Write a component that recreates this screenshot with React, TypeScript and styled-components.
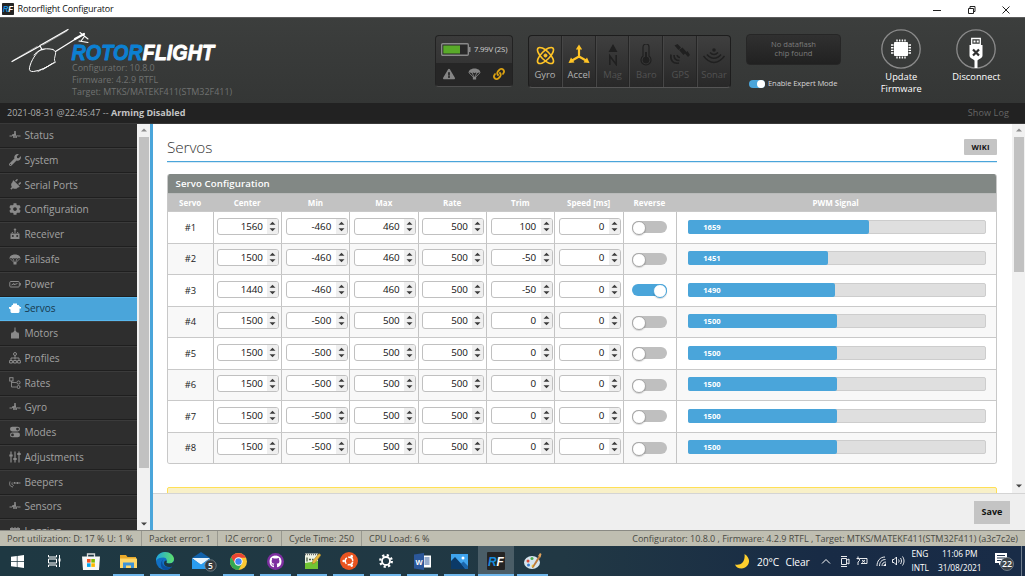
import React from 'react';
import styled, { createGlobalStyle, css } from 'styled-components';
import { FaWrench, FaPlug, FaCog, FaLink, FaExclamationTriangle, FaGithub } from 'react-icons/fa';

const BLUE = '#4aa5da';

const GlobalStyle = createGlobalStyle`
  * { box-sizing: border-box; }
  html, body { margin: 0; padding: 0; overflow: hidden; }
  body { font-family: "Open Sans", "Liberation Sans", sans-serif; font-size: 10px; color: #222; }
  svg { display: block; flex: none; }
`;

const Window = styled.div`
  width: 1025px; height: 576px; display: flex; flex-direction: column; overflow: hidden; background: #fff;
`;

/* ---------- title bar ---------- */
const TitleBar = styled.div`
  height: 17px; flex: none; display: flex; align-items: center; padding: 0 14px 0 1.5px; background: #fff;
`;
const AppTitle = styled.span`
  flex: 1; padding-left: 4px; font-size: 9px; line-height: 17px; color: #111; letter-spacing: -0.17px; white-space: nowrap;
`;
const WindowButtons = styled.div` display: flex; align-items: center; padding-top: 3px; `;

/* ---------- header ---------- */
const Header = styled.header`
  height: 86px; flex: none; display: flex; align-items: flex-start;
  background: linear-gradient(#3c3e3d, #343635); border-top: 1px solid #5c5c5c;
`;
const Brand = styled.div` width: 435px; padding-top: 8px; `;
const BrandInfo = styled.div`
  padding-left: 72px; margin-top: -4px; font-size: 8.95px; line-height: 12px; color: #707271; white-space: nowrap;
`;
const InfoLine = styled.div``;
const StatusBox = styled.div`
  width: 78px; height: 52px; margin-top: 17px; border: 1px solid #222; border-bottom-color: #4f4f4f; border-radius: 4px;
  background: linear-gradient(#3b3b3b, #2f2f2f); overflow: hidden; display: flex; flex-direction: column;
`;
const BatteryRow = styled.div`
  height: 27px; display: flex; align-items: center; padding: 0 0 1px 5px; gap: 3px; color: #d0d0d0; font-size: 7.8px;
  letter-spacing: -0.22px; white-space: nowrap;
`;
const WarnRow = styled.div`
  flex: 1; background: #262626; display: flex; align-items: center; justify-content: space-between; padding: 0 7px 2px;
  color: #858585;
`;
const SensorBox = styled.div`
  width: 203px; height: 53px; margin: 17px 0 0 15px; display: flex; border: 1px solid #1d1d1d; border-bottom-color: #555;
  border-radius: 4px; background: linear-gradient(#3f3f3f, #282828); overflow: hidden;
`;
const Sensor = styled.div<{ $on?: boolean }>`
  flex: 1; display: flex; flex-direction: column; align-items: center; padding-top: 8px; font-size: 9.4px; line-height: 12px;
  color: ${(p) => (p.$on ? '#b2b2b2' : '#525252')};
  border-right: 1px solid #252525; border-left: 1px solid #464646;
  &:first-child { border-left: 0; } &:last-child { border-right: 0; }
  svg { color: ${(p) => (p.$on ? '#ffc426' : '#202020')}; margin-bottom: 3px; }
`;
const FlashColumn = styled.div` width: 95px; margin: 16px 0 0 15px; display: flex; flex-direction: column; `;
const FlashBox = styled.div`
  height: 31px; border: 1px solid #262626; border-radius: 4px; background: linear-gradient(#303030, #212121);
  color: #7c7c7c; font-size: 7.6px; line-height: 9px; text-align: center; padding-top: 5px;
`;
const ExpertMode = styled.div`
  display: flex; align-items: center; margin: 13px 0 0 2.5px; gap: 3.500px; font-size: 7.6px; line-height: 10px; color: #d6d6d6;
  white-space: nowrap; letter-spacing: -0.1px;
`;
const ExpertLabel = styled.span` padding-bottom: 1px; `;
const SmallSwitch = styled.span`
  width: 16px; height: 8px; border-radius: 4px; background: ${BLUE}; display: flex; justify-content: flex-end;
  &::after { content: ""; width: 8px; height: 8px; border-radius: 50%; background: #fff; }
`;
const HeaderAction = styled.div<{ $gap: number }>`
  width: 60px; margin: 11px 0 0 ${(p) => p.$gap}px; display: flex; flex-direction: column; align-items: center;
  font-size: 9.3px; line-height: 12px; color: #fff; text-align: center; white-space: nowrap;
  svg { margin-bottom: 1.500px; }
`;

const LogBar = styled.div`
  height: 21px; flex: none; display: flex; justify-content: space-between; align-items: center; padding: 0 16px 1px 7px;
  background: #222; border-bottom: 1px solid #393939; color: #ababab; font-size: 9.05px; white-space: nowrap;
  b { color: #c4c4c4; }
`;
const ShowLog = styled.span` color: #666; letter-spacing: 0.1px; `;

/* ---------- sidebar ---------- */
const Main = styled.div` height: 406px; flex: none; display: flex; overflow: hidden; `;
const Sidebar = styled.nav` width: 137px; height: 406px; overflow: hidden; background: #2e2e2e; `;
const NavItem = styled.div<{ $active?: boolean }>`
  height: 24.75px; display: flex; align-items: center; padding: 0 0 1px 9px; gap: 3.4px;
  font-size: 10.1px; color: #a2a2a2; border-top: 1px solid #3b3b3b; border-bottom: 1px solid #1f1f1f;
  &:first-child { margin-top: -0.7px; }
  svg { color: #8a8a8a; }
  ${(p) => p.$active && css`
    background: ${BLUE}; color: #17394d; border-color: #59b8ee;
    svg { color: #fff; }
  `}
`;
const TiltedIcon = styled.span` display: block; transform: rotate(45deg); `;
const ScrollTrack = styled.div<{ $w: number; $bottom: number }>`
  width: ${(p) => p.$w}px; flex: none; background: #f1f1f1; display: flex; flex-direction: column; align-items: center;
  justify-content: space-between; padding: 4px 0 ${(p) => p.$bottom}px;
`;
const ScrollThumb = styled.div<{ $h: number }>`
  width: 10px; height: ${(p) => p.$h}px; background: #c1c1c1; margin-top: 5px;
`;
const ScrollHead = styled.div` display: flex; flex-direction: column; align-items: center; `;

/* ---------- content ---------- */
const Content = styled.div`
  width: 875px; flex: none; border-left: 3px solid ${BLUE}; display: flex; flex-direction: column; background: #fff;
`;
const ContentScroll = styled.div` height: 369px; display: flex; overflow: hidden; `;
const Page = styled.div` width: 859px; padding: 13px 15px 0 14px; flex: none; `;
const PageHead = styled.div`
  height: 25px; border-bottom: 1px solid ${BLUE}; display: flex; justify-content: space-between; align-items: flex-start;
`;
const PageHeadRule = styled(PageHead)` box-shadow: 0 1px 0 #d8eaf5; `;
const PageTitle = styled.h1`
  margin: 0; font-size: 15.3px; font-weight: 300; line-height: 20px; color: #333; letter-spacing: -0.1px;
`;
const WikiButton = styled.div`
  width: 33px; height: 16px; margin-top: 2px; background: #c4c4c4; text-align: center; line-height: 16px; border-radius: 1px;
  font-size: 7.6px; font-weight: 700; color: #111; letter-spacing: 0.2px;
`;
const Panel = styled.section`
  margin: 12px 0 0 0; border: 1px solid #c8c8c8; border-top: 0; border-radius: 3px; overflow: hidden; width: 830px;
`;
const PanelTitle = styled.div`
  height: 20px; background: #828885; color: #fff; font-size: 9.65px; font-weight: 600; line-height: 20px; padding-left: 7.5px;
  border-bottom: 1px solid #b9bbba; letter-spacing: 0.1px;
`;
const columns = '45.8px repeat(6, 68.3px) 53px 1fr';
const HeadRow = styled.div`
  display: grid; grid-template-columns: ${columns}; height: 17px; background: #c2c2c2; color: #fff; font-size: 8px;
  font-weight: 700; line-height: 17px; text-align: center;
  span { padding-right: 1.500px; }
`;
const Row = styled.div`
  display: grid; grid-template-columns: ${columns}; height: 31.5px; border-top: 1px solid #c9c9c9; background: #fff;
  &:nth-child(even) { background: #f8f8f8; }
`;
const Cell = styled.div`
  display: flex; align-items: center; justify-content: center; border-right: 1px solid #c4c4c4; font-size: 9.4px;
  &:last-child { border-right: 0; }
`;
const NumberField = styled.div`
  width: 62px; height: 17px; border: 1px solid #c0c0c0; border-radius: 3px; background: #fff; display: flex; overflow: hidden;
  font-size: 9.8px; line-height: 15px; color: #111; margin: -2px 0 0 2px;
`;
const NumberValue = styled.span` flex: 1; text-align: right; padding-right: 4.500px; letter-spacing: -0.05px; `;
const Spinner = styled.span`
  width: 11px; background: #efefef; display: flex; align-items: center; justify-content: center;
`;
const Switch = styled.span<{ $on: boolean }>`
  width: 35px; height: 12px; border-radius: 6px; background: ${(p) => (p.$on ? BLUE : '#bfbfbf')}; display: flex;
  margin-left: -1px; justify-content: ${(p) => (p.$on ? 'flex-end' : 'flex-start')};
  &::after {
    content: ""; width: 12px; height: 12px; border-radius: 50%; background: #fff;
    border: 1px solid ${(p) => (p.$on ? BLUE : '#a5a5a5')}; box-shadow: 0 1px 1px rgba(0,0,0,.15);
  }
`;
const Meter = styled.div`
  width: 298px; height: 14px; margin: -1px 0 0 2px; background: #dfdfdf; border: 1px solid #cdcdcd; border-radius: 2px; display: flex;
`;
const MeterFill = styled.div`
  margin: -1px 0 -1px -1px; background: ${BLUE}; border-radius: 2px; color: #fff; font-size: 7.6px; font-weight: 700;
  line-height: 15px; padding-left: 15px;
`;
const Note = styled.div`
  margin-top: 23px; height: 30px; background: #f8f0c8; border: 1px solid #ffe055; border-radius: 2px; width: 830px;
`;
const SaveBar = styled.div`
  height: 37px; background: #efefef; border-top: 1px solid #d4d4d4; display: flex; justify-content: flex-end;
  padding: 7px 15px 0 0;
`;
const SaveButton = styled.div`
  width: 36px; height: 23px; background: #c4c4c4; font-size: 9px; font-weight: 700; line-height: 22px; text-align: center;
  color: #111;
`;

/* ---------- status bar ---------- */
const StatusBar = styled.div`
  height: 16px; flex: none; background: #bfbeb1; border-top: 1px solid #8a8a84; display: flex; line-height: 16px;
  font-size: 9.04px; color: #494943; white-space: nowrap;
`;
const StatusCell = styled.div<{ $w: number }>`
  width: ${(p) => p.$w}px; padding-left: 7px; border-right: 1px solid #999990;
  &:nth-child(5) { border-right: 0; }
`;
const StatusRight = styled.div` flex: 1; text-align: right; padding-right: 7px; letter-spacing: -0.03px; `;

/* ---------- taskbar ---------- */
const Taskbar = styled.footer`
  height: 30px; flex: none; display: flex; background: linear-gradient(90deg, #1e3842, #213844 55%, #182b45 80%, #192c47);
  color: #fff;
`;
const TaskButton = styled.div<{ $open?: boolean; $active?: boolean }>`
  width: 36.8px; height: 30px; display: flex; align-items: center; justify-content: center; position: relative;
  background: ${(p) => (p.$active ? '#4a5d67' : 'transparent')};
  &:first-child { margin-left: -0.7px; }
  ${(p) => (p.$open || p.$active) && css`
    &::after {
      content: ""; position: absolute; bottom: 0; left: ${p.$active ? 0 : 3}px; right: ${p.$active ? 0 : 3}px; height: 2px;
      background: #6fb7ec;
    }
  `}
`;
const TrayGroup = styled.div`
  margin-left: auto; display: flex; align-items: center; font-size: 10.2px; white-space: nowrap;
`;
const Weather = styled.span` padding: 1px 0 0 7px; width: 70.5px; letter-spacing: -0.1px; word-spacing: 4px; `;
const TwoLines = styled.div<{ $w: number; $right?: boolean }>`
  width: ${(p) => p.$w}px; font-size: 8.4px; line-height: 13.5px; letter-spacing: -0.1px; text-align: ${(p) => (p.$right ? 'center' : 'left')};
  margin-top: -1px;
`;
const Notices = styled.div` width: 39px; display: flex; padding-left: 12px; `;
const DesktopEdge = styled.div` width: 4px; height: 30px; border-left: 1px solid #6e7c8c; `;

const RfMark = ({ size }: { size: number }) => (
  <svg width={size} height={size} viewBox="0 0 18 18">
    <rect width="18" height="18" rx="1" fill="#242424" />
    <text x="1" y="13.5" fontFamily="Liberation Sans" fontWeight="700" fontStyle="italic" fontSize="12.5" fill="#178bdc" textLength="15.8" lengthAdjust="spacingAndGlyphs">R<tspan fill="#fff">F</tspan></text>
  </svg>
);

const Logo = () => (
  <svg width="220" height="40" viewBox="0 26 220 40" fill="none" stroke="#fff" strokeLinecap="round">
    <path d="M12 61.5L40 46M40 45.5L68 29.5" strokeWidth="1.3" />
    <path d="M13 60.5L37 46.5M43 45L67 31" strokeWidth=".5" />
    <path d="M40 46l2 3.5" strokeWidth="1.2" />
    <path d="M53 49.5c-4-1-9-1-12 .2-5 3-10 11-11.5 18-.6 3 1 4 4 3.8 6-.6 14-4.5 18-7.5" strokeWidth="1" />
    <path d="M53 49.5c2 1 3 2.5 2.5 4.5l-1 4.5c-.4 3 1 2 .5 4M34 55c3-4 7-5.5 10-5.5M43 69.5l11-7" strokeWidth=".9" />
    <path d="M38 71.5l17-9" strokeWidth=".8" />
    <path d="M55.5 51.5l20-12.5" strokeWidth="1.3" />
    <path d="M75 39l9-5" strokeWidth="2.2" />
    <path d="M80 32.5l8 6.5M79 41c3 .5 6 1 9 1.5M84 37l-3 4" strokeWidth="1.1" />
    <text x="71.5" y="59.5" fontFamily="Liberation Sans" fontWeight="700" fontStyle="italic" fontSize="22.5" strokeLinejoin="round"
      fill="#0c80d2" stroke="#0c80d2" strokeWidth=".9" textLength="142.5" lengthAdjust="spacingAndGlyphs">
      ROTOR<tspan fill="#fff" stroke="#fff">FLIGHT</tspan>
    </text>
  </svg>
);

/* The lower part of the helicopter's skids reaches beside the info lines. */
const LogoFrame = styled.div` height: 40px; svg { overflow: visible; } `;

const Parachute = ({ size = 12 }: { size?: number }) => (
  <svg width={size} height={size} viewBox="0 0 12 12" fill="none" stroke="currentColor">
    <path d="M.5 5.5C.5 0 11.5 0 11.5 5.5L10 5l-1.500.8L7.200 5 6 5.800 4.800 5l-1.300.8L2 5z" fill="currentColor" stroke="none" />
    <path d="M1 5.5L5 9.5M11 5.5L7 9.5M4 5.5l1.5 4M8 5.5L6.5 9.5" strokeWidth=".8" />
    <path d="M4.5 9h3v2.5h-3z" fill="currentColor" stroke="none" />
  </svg>
);

const Glyph = ({ children }: { children: React.ReactNode }) => (
  <svg width="12" height="12" viewBox="0 0 12 12" fill="none" stroke="currentColor" strokeWidth="1">{children}</svg>
);
const Pulse = () => <Glyph><path d="M.5 7h2.700l1-2 .8 4 1-7 1 7 1-2.500.5.5h3" strokeLinejoin="round" /></Glyph>;

const navItems: [string, React.ReactNode][] = [
  ['Status', <Pulse />],
  ['System', <FaWrench size={12} />],
  ['Serial Ports', <TiltedIcon><FaPlug size={12} /></TiltedIcon>],
  ['Configuration', <FaCog size={12} />],
  ['Receiver', <Glyph><path d="M6 5V1.5" /><circle cx="6" cy="1.5" r=".7" fill="currentColor" /><path d="M1.5 5.5h9v5.5h-9z" fill="currentColor" stroke="none" /><path d="M3 5.5l.5-1.5M9 5.5L8.500 4" /><circle cx="3.8" cy="8" r="1" fill="#2e2e2e" stroke="none" /><circle cx="8.2" cy="8" r="1" fill="#2e2e2e" stroke="none" /></Glyph>],
  ['Failsafe', <Parachute />],
  ['Power', <Glyph><rect x=".8" y="3.5" width="9.5" height="5.5" rx="1" /><path d="M11.3 5v2.5M2.500 7l2.500-1.500v1.200L8.500 5.500" /></Glyph>],
  ['Servos', <Glyph><path d="M4 1.500h4v1.500h1.500L11 5h1v1.500h-1.500V10l-1 1h-7l-1-1V7.500L0 6.500V5h2l1-2h1z" fill="currentColor" stroke="none" /></Glyph>],
  ['Motors', <Glyph><path d="M5.500.5h1v3l1.500 2H9.500L10 7v4.500H2V7l.5-1.500H4l1.500-2z" fill="currentColor" stroke="none" /></Glyph>],
  ['Profiles', <Glyph><circle cx="6" cy="2" r="1.500" /><path d="M6 3.500v4M2 8V6h8v2" /><path d="M.6 8.500h2.800v2.500H.6zM4.600 8.500h2.800v2.500H4.600zM8.600 8.500h2.800v2.500H8.600z" /></Glyph>],
  ['Rates', <Glyph><rect x=".7" y=".7" width="3.300" height="3.300" /><path d="M2.500 4v6h5M2.500 5.500h5" strokeWidth=".9" /><circle cx="9.500" cy="5.500" r="1.600" /><circle cx="9.500" cy="10" r="1.500" /></Glyph>],
  ['Gyro', <Pulse />],
  ['Modes', <Glyph><rect x="1" y=".8" width="10" height="4.600" rx="2.300" fill="currentColor" stroke="none" /><rect x="1" y="6.600" width="10" height="4.600" rx="2.300" fill="currentColor" stroke="none" /><circle cx="8.500" cy="3.100" r="1.400" fill="#2e2e2e" stroke="none" /><circle cx="3.500" cy="8.900" r="1.400" fill="#2e2e2e" stroke="none" /></Glyph>],
  ['Adjustments', <Glyph><path d="M2 .5v11M6 .5v11M10 .5v11" strokeWidth="1.200" /><path d="M.3 4.500h3.400M4.300 8h3.400M8.300 3h3.400" strokeWidth="1.800" /></Glyph>],
  ['Beepers', <Glyph><path d="M1 5.500C0 9 1 10.500 4 11M3.200 6.500c-.6 1.500 0 2.500 1.500 3M4.500 7h7M8.500 6v2M5.500 6v1.500" /></Glyph>],
  ['Sensors', <Pulse />],
  ['Logging', <Glyph><path d="M1 3h10v7H1z" fill="currentColor" stroke="none" /><path d="M3 2v3M6 2v3M9 2v3" /></Glyph>],
];

const sensors: { name: string; on?: boolean; icon: React.ReactNode }[] = [
  { name: 'Gyro', on: true, icon: <><g strokeWidth="1.6"><ellipse cx="11.5" cy="11.5" rx="10.500" ry="4.300" transform="rotate(45 11.5 11.5)" /><ellipse cx="11.5" cy="11.5" rx="10.500" ry="4.300" transform="rotate(-45 11.5 11.5)" /></g><circle cx="11.5" cy="11.5" r="1.500" fill="currentColor" /></> },
  { name: 'Accel', on: true, icon: <><path d="M11 13V4M11 12.500L4 16.500M11 12.500L18 16.500" strokeWidth="2.200" /><path d="M11 .5l3.200 5H7.800zM.5 19l2.500-5.500 3.500 5zM21.500 19L19 13.500l-3.500 5z" fill="currentColor" stroke="none" /></> },
  { name: 'Mag', icon: <><path d="M11 0l4.500 8h-9z" fill="currentColor" stroke="none" /><path d="M7.800 21V12l6.400 8.500V11" strokeWidth="1.600" /></> },
  { name: 'Baro', icon: <><path d="M8 12V3a3 3 0 0 1 6 0v9a5 5 0 1 1-6 0z" strokeWidth="1.200" /><circle cx="11" cy="16" r="3" fill="currentColor" /><path d="M11 8v8" strokeWidth="1.800" /></> },
  { name: 'GPS', icon: <><path d="M5.500 1.500l3-1.500 3.500 3.500-2.500 2.500zM10 6l3.500-2.500 4 4.500-3 3zM16 9.500l2.500-2.500 2.500 4-2 2z" fill="currentColor" stroke="none" /><path d="M2 10.500c-1 6 2 9.500 8 8.500M5 11c0 3.500 2 5.500 5.500 5.500M8 11c.5 1.500 1.500 2.500 3 2.500" strokeWidth="1.600" /></> },
  { name: 'Sonar', icon: <><path d="M.5 12c6 8.500 15 8.500 21 0M4 10.500c4 5 10 5 14 0M7 8.500c2.500 2.700 5.500 2.700 8 0" strokeWidth="1.500" /><circle cx="11" cy="6" r="1.800" fill="currentColor" stroke="none" /></> },
];

const servos: { values: number[]; reverse?: boolean; pwm: number }[] = [
  { values: [1560, -460, 460, 500, 100, 0], pwm: 1659 },
  { values: [1500, -460, 460, 500, -50, 0], pwm: 1451 },
  { values: [1440, -460, 460, 500, -50, 0], reverse: true, pwm: 1490 },
  { values: [1500, -500, 500, 500, 0, 0], pwm: 1500 },
  { values: [1500, -500, 500, 500, 0, 0], pwm: 1500 },
  { values: [1500, -500, 500, 500, 0, 0], pwm: 1500 },
  { values: [1500, -500, 500, 500, 0, 0], pwm: 1500 },
  { values: [1500, -500, 500, 500, 0, 0], pwm: 1500 },
];

const headings = ['Servo', 'Center', 'Min', 'Max', 'Rate', 'Trim', 'Speed [ms]', 'Reverse', 'PWM Signal'];

const Arrow = ({ down, color }: { down?: boolean; color: string }) => (
  <svg width="6" height="4" viewBox="0 0 6 4"><path d={down ? 'M0 .5h6L3 3.500z' : 'M0 3.500h6L3 .5z'} fill={color} /></svg>
);

const taskIcons: { open?: boolean; active?: boolean; icon: React.ReactNode }[] = [
  { icon: <svg width="13" height="13" viewBox="0 0 13 13" fill="#fff"><path d="M0 1.800L5.800 1v5.100H0zM6.500.9L13 0v6.100H6.500zM0 6.800h5.800V12L0 11.200zM6.500 6.800H13V13l-6.500-.9z" /></svg> },
  { icon: <svg width="13" height="12" viewBox="0 0 13 12" fill="none" stroke="#fff"><path d="M.5 0v2h8V0M.5 12v-2h8v2M.5 4h8v4h-8zM11.500 0v12" /><path d="M10.500 3.500h2v3h-2z" fill="#fff" stroke="none" /></svg> },
  { icon: <svg width="18" height="18" viewBox="0 0 18 18"><path d="M5.500 5V2h7v3" fill="none" stroke="#ddd" strokeWidth="1.300" /><path d="M0 4.500h18L17 18H1z" fill="#f7f7f7" /><path d="M5 7h3.600v3.600H5z" fill="#f25022" /><path d="M9.300 7h3.600v3.600H9.300z" fill="#7fba00" /><path d="M5 11.300h3.600v3.600H5z" fill="#00a4ef" /><path d="M9.300 11.300h3.600v3.600H9.300z" fill="#ffb900" /></svg> },
  { open: true, icon: <svg width="17" height="15" viewBox="0 0 17 15"><path d="M0 1h6l1.500 2H16v4H0z" fill="#e9a92a" /><path d="M0 4.500h17V14H0z" fill="#ffd667" /><path d="M3 14V8.500h11V14h-3v-2.500H6V14z" fill="#3f93d8" /></svg> },
  { open: true, icon: <svg width="18" height="18" viewBox="0 0 18 18"><defs><linearGradient id="eg" x1="0" x2="1"><stop offset="0" stopColor="#1fa3e0" /><stop offset="1" stopColor="#5ee06a" /></linearGradient></defs><circle cx="9" cy="9" r="9" fill="#1170c4" /><path d="M0 9C0 3.500 4 0 9 0s9 3.500 9 7c0 3-2.200 4.500-5 4.500-2 0-3-.7-2.500-1.500.8-1 .5-4.500-3-4.500C4 5.500 1 6.500 0 9z" fill="url(#eg)" /><path d="M7.500 7c-3 3-.5 8.500 5 8.200 2 0 3-.5 4-1-2 3-5 3.800-7.500 3.800C4 17 3.500 9.500 7.500 7z" fill="#0c4f9c" /><path d="M10.600 9.800c-.6 1 .4 1.700 2.400 1.700 2 0 4-.8 5-2.500 0 2-.6 4-1.500 5.200-4 2-8.500.3-8.500-3 0-1.600 1-2.700 2-2.700.8 0 1 .7.6 1.300z" fill="#1e3842" /></svg> },
  { icon: <svg width="30" height="21" viewBox="-4 0 30 21"><path d="M1 7l9-6 9 6v11H1z" fill="#1162ab" /><path d="M1 7h18l-9 7z" fill="#e8f4fc" /><path d="M1 7.500V18h18V7.500l-9 6z" fill="#2a9df0" /><circle cx="19.500" cy="14.500" r="5.700" fill="#353b3f" stroke="#85909a" strokeWidth=".7" /><text x="19.500" y="17.500" fill="#fff" fontFamily="Open Sans" fontSize="8.500" fontWeight="600" textAnchor="middle">5</text></svg> },
  { open: true, icon: <svg width="17" height="17" viewBox="0 0 18 18"><circle cx="9" cy="9" r="9" fill="#fcc934" /><path d="M9 5h7.900A9 9 0 0 0 1.200 4.500L5 11z" fill="#ea4335" /><path d="M1.200 4.500A9 9 0 0 0 9 18l3.700-7L5.500 11z" fill="#34a853" /><circle cx="9" cy="9" r="4.400" fill="#fff" /><circle cx="9" cy="9" r="3.400" fill="#4285f4" /></svg> },
  { open: true, icon: <svg width="17" height="17" viewBox="0 0 17 17"><circle cx="8.500" cy="8.500" r="8.500" fill="#7d2fa0" /><FaGithub x={2.2} y={2.2} size={12.6} color="#fff" /></svg> },
  { open: true, icon: <svg width="17" height="18" viewBox="0 0 17 18"><path d="M1 1.500h13V17H1z" fill="#eef3e4" /><path d="M1 11l13-2v8H1z" fill="#71c334" /><path d="M1 2.500h13" stroke="#666" strokeDasharray="1 1" strokeWidth="1.500" /><path d="M3 5.500v4M5 7.500h2M8 7.500h1.500" stroke="#4a5a42" strokeWidth="1.300" /><path d="M8 12l1-3.500 6-7 2 1.500L11 11z" fill="#e8b83c" stroke="#8b702d" strokeWidth=".5" /></svg> },
  { open: true, icon: <svg width="18" height="18" viewBox="0 0 18 18"><circle cx="9" cy="9" r="9" fill="#e95420" /><circle cx="9" cy="9" r="3.800" fill="none" stroke="#fff" strokeWidth="1.500" strokeDasharray="6.500 1.460" strokeDashoffset="-.7" /><g fill="#fff"><circle cx="3.700" cy="9" r="1.300" /><circle cx="11.700" cy="4.400" r="1.300" /><circle cx="11.700" cy="13.600" r="1.300" /></g></svg> },
  { open: true, icon: <svg width="14" height="14" viewBox="0 0 14 14" fill="none" stroke="#fff"><circle cx="7" cy="7" r="4" strokeWidth="1.800" /><circle cx="7" cy="7" r="5.800" strokeWidth="2.300" strokeDasharray="2.200 2.355" /></svg> },
  { open: true, icon: <svg width="17" height="17" viewBox="0 0 17 17"><path d="M9 2.500h8v12H9z" fill="#fff" /><path d="M10.500 5h5M10.500 7h5M10.500 9h5M10.500 11h5" stroke="#2b579a" /><path d="M0 1.500L10 0v17L0 15.500z" fill="#2b579a" /><text x="5" y="11.500" fill="#fff" textAnchor="middle" fontFamily="Liberation Sans" fontWeight="700" fontSize="7.500">W</text></svg> },
  { open: true, icon: <svg width="17" height="15" viewBox="0 0 17 15"><path d="M0 0h17v15H0z" fill="#3fa4ee" /><path d="M0 7l4-4 11 12H0z" fill="#0b3a68" /><path d="M10 9.500l2.500-2 4.500 4.500v3h-3z" fill="#1c66ab" /><circle cx="12" cy="4" r="1.500" fill="#fff" /></svg> },
  { active: true, icon: <RfMark size={18} /> },
  { open: true, icon: <svg width="18" height="17" viewBox="0 0 18 17"><ellipse cx="8" cy="9.500" rx="8" ry="6.500" fill="#d6e5ef" /><circle cx="4" cy="8" r="1.500" fill="#d84b3b" /><circle cx="8" cy="5.500" r="1.500" fill="#4cae4f" /><circle cx="4.500" cy="12" r="1.500" fill="#3b7fd0" /><circle cx="9" cy="13" r="1.500" fill="#eec53a" /><path d="M8 15c2-5 4-8 7-12l1.500 1C14 8 12 11 9 15z" fill="#bd7a3c" /><path d="M14 3l2-3 1.500 1-1 3.500z" fill="#e0a35d" /></svg> },
];

const ServoRow = ({ index, servo }: { index: number; servo: (typeof servos)[number] }) => (
  <Row>
    <Cell>#{index + 1}</Cell>
    {servo.values.map((v, i) => (
      <Cell key={i}>
        <NumberField>
          <NumberValue>{v}</NumberValue>
          <Spinner>
            <svg width="7" height="11" viewBox="0 0 7 11" fill="#3d3d3d"><path d="M.5 3.800h6L3.500.8zM.5 7.200h6l-3 3z" /></svg>
          </Spinner>
        </NumberField>
      </Cell>
    ))}
    <Cell><Switch $on={!!servo.reverse} /></Cell>
    <Cell>
      <Meter><MeterFill style={{ width: `${((servo.pwm - 750) / 1500) * 298}px` }}>{servo.pwm}</MeterFill></Meter>
    </Cell>
  </Row>
);

export default function App() {
  return (
    <Window>
      <GlobalStyle />
      <TitleBar>
        <RfMark size={12} />
        <AppTitle>Rotorflight Configurator</AppTitle>
        <WindowButtons>
          <svg width="78" height="10" viewBox="0 0 78 10" fill="none" stroke="#222">
            <path d="M0 5.500h8M35.500 3.500h5v5h-5zM37 3V1.500h5v5h-1.500M69.500 1.500l7 7M76.500 1.500l-7 7" />
          </svg>
        </WindowButtons>
      </TitleBar>

      <Header>
        <Brand>
          <LogoFrame><Logo /></LogoFrame>
          <BrandInfo>
            <InfoLine>Configurator: 10.8.0</InfoLine>
            <InfoLine>Firmware: 4.2.9 RTFL</InfoLine>
            <InfoLine>Target: MTKS/MATEKF411(STM32F411)</InfoLine>
          </BrandInfo>
        </Brand>
        <StatusBox>
          <BatteryRow>
            <svg width="30" height="13" viewBox="0 0 30 13">
              <rect x=".7" y=".7" width="26.600" height="11.600" rx="1" fill="#292929" stroke="#8a8a8a" strokeWidth="1.400" />
              <path d="M28 4h1.500v5H28z" fill="#8a8a8a" />
              <path d="M2.300 2.500H19v8H2.300z" fill="#59aa29" />
            </svg>
            7.99V (2S)
          </BatteryRow>
          <WarnRow>
            <FaExclamationTriangle size={12} />
            <Parachute size={13} />
            <FaLink size={12} color="#d9a012" />
          </WarnRow>
        </StatusBox>
        <SensorBox>
          {sensors.map((s) => (
            <Sensor key={s.name} $on={s.on}>
              <svg width="22" height="22" viewBox="0 0 22 22" fill="none" stroke="currentColor">{s.icon}</svg>
              {s.name}
            </Sensor>
          ))}
        </SensorBox>
        <FlashColumn>
          <FlashBox>No dataflash<br />chip found</FlashBox>
          <ExpertMode><SmallSwitch /><ExpertLabel>Enable Expert Mode</ExpertLabel></ExpertMode>
        </FlashColumn>
        <HeaderAction $gap={30.3}>
          <svg width="40" height="40" viewBox="0 0 40 40" fill="none" stroke="#fff">
            <circle cx="20" cy="20" r="19.200" stroke="#8b8b8b" strokeWidth="1.300" />
            <path d="M13.500 13.500h13v13h-13z" fill="#fff" />
            <path d="M16 10.500v2M18.700 10.500v2M21.400 10.500v2M24 10.500v2M16 27.500v2M18.700 27.500v2M21.400 27.500v2M24 27.500v2M10 16h2.500M10 18.700h2.500M10 21.400h2.500M10 24h2.500M27.500 16H30M27.500 18.700H30M27.500 21.400H30M27.500 24H30" strokeWidth="1.400" />
          </svg>
          Update<br />Firmware
        </HeaderAction>
        <HeaderAction $gap={15}>
          <svg width="40" height="40" viewBox="0 0 40 40" fill="none">
            <circle cx="20" cy="20" r="19.200" stroke="#8b8b8b" strokeWidth="1.300" />
            <path d="M15.700 9.500h8.600v6h-8.600z" stroke="#fff" strokeWidth="1.300" />
            <path d="M17.500 11.500h2v2h-2zM20.700 11.500h2v2h-2zM13.500 16h13v10.500c0 3-4 3.500-5 5V39h-3v-7.500c-1-1.500-5-2-5-5z" fill="#fff" />
            <path d="M17 20.500l6 6M23 20.500l-6 6" stroke="#2f2f2f" strokeWidth="2.200" />
          </svg>
          Disconnect
        </HeaderAction>
      </Header>

      <LogBar>
        <span>2021-08-31 @22:45:47 -- <b>Arming Disabled</b></span>
        <ShowLog>Show Log</ShowLog>
      </LogBar>

      <Main>
        <Sidebar>
          {navItems.map(([name, icon]) => (
            <NavItem key={name} $active={name === 'Servos'}>{icon}{name}</NavItem>
          ))}
        </Sidebar>
        <ScrollTrack $w={13} $bottom={4}>
          <ScrollHead><Arrow color="#8c8c8c" /><ScrollThumb $h={331} /></ScrollHead>
          <Arrow down color="#444" />
        </ScrollTrack>
        <Content>
          <ContentScroll>
            <Page>
              <PageHeadRule><PageTitle>Servos</PageTitle><WikiButton>WIKI</WikiButton></PageHeadRule>
              <Panel>
                <PanelTitle>Servo Configuration</PanelTitle>
                <HeadRow>{headings.map((h) => <span key={h}>{h}</span>)}</HeadRow>
                <div>{servos.map((s, i) => <ServoRow key={i} index={i} servo={s} />)}</div>
              </Panel>
              <Note />
            </Page>
            <ScrollTrack $w={13} $bottom={5}>
              <ScrollHead><Arrow color="#8c8c8c" /><ScrollThumb $h={135} /></ScrollHead>
              <Arrow down color="#444" />
            </ScrollTrack>
          </ContentScroll>
          <SaveBar><SaveButton>Save</SaveButton></SaveBar>
        </Content>
      </Main>

      <StatusBar>
        <StatusCell $w={142}>Port utilization: D: 17 % U: 1 %</StatusCell>
        <StatusCell $w={76}>Packet error: 1</StatusCell>
        <StatusCell $w={64}>I2C error: 0</StatusCell>
        <StatusCell $w={80}>Cycle Time: 250</StatusCell>
        <StatusCell $w={76}>CPU Load: 6 %</StatusCell>
        <StatusRight>Configurator: 10.8.0 , Firmware: 4.2.9 RTFL , Target: MTKS/MATEKF411(STM32F411) (a3c7c2e)</StatusRight>
      </StatusBar>

      <Taskbar>
        {taskIcons.map((t, i) => <TaskButton key={i} $open={t.open} $active={t.active}>{t.icon}</TaskButton>)}
        <TrayGroup>
          <svg width="15" height="15" viewBox="0 0 15 15"><path d="M9.500 0c8 5 4.500 14-3 14.500C3 14.500 1 13 0 10.500c6 1.500 10.500-3 9.500-10.500z" fill="#ffd02e" /></svg>
          <Weather>20°C Clear</Weather>
          <svg width="91" height="12" viewBox="0 0 91 12" fill="none" stroke="#fff">
            <path d="M1 8.500l4-4 4 4" />
            <path d="M20.500 3.500h5v6h-5zM20 1.500h6M20 11.500h6M26 5l2-1v5l-2-1" strokeWidth=".9" />
            <path d="M39 3.500h7v5h-6M37 1.500v3M35.500 3.500h3v2l-1.500 1.500v3M41 5l3 2.500M44 5l-3 2.500" strokeWidth=".9" />
            <path d="M56 11c0-5 3-9 8-9M58.500 11c0-3.500 2-6.500 6-6.500M61 11c0-2.500 1.500-4 4-4" strokeWidth=".9" /><path d="M62 11l3-3v3z" fill="#fff" stroke="none" />
            <path d="M71.500 4.500H73l2.500-2.500v8L73 7.500h-1.500zM77.500 4.500c.8 1 .8 2 0 3M79.500 3c1.300 2 1.300 4 0 6M81.500 1.500c2 3 2 6 0 9" strokeWidth=".9" />
          </svg>
          <TwoLines $w={26}>ENG<br />INTL</TwoLines>
          <TwoLines $w={44.5} $right>11:06 PM<br />31/08/2021</TwoLines>
          <Notices>
            <svg width="24" height="20" viewBox="0 0 24 20">
              <path d="M1 2h12v10H7l-2 2.500V12H1z" fill="#fff" /><path d="M3 4.500h8M3 7h8M3 9.500h4" stroke="#24364f" />
              <circle cx="13" cy="13" r="6.500" fill="#3b4248" stroke="#8d979f" strokeWidth=".7" />
              <text x="13" y="16.200" fill="#fff" textAnchor="middle" fontFamily="Open Sans" fontWeight="600" fontSize="8.800">22</text>
            </svg>
          </Notices>
          <DesktopEdge />
        </TrayGroup>
      </Taskbar>
    </Window>
  );
}
